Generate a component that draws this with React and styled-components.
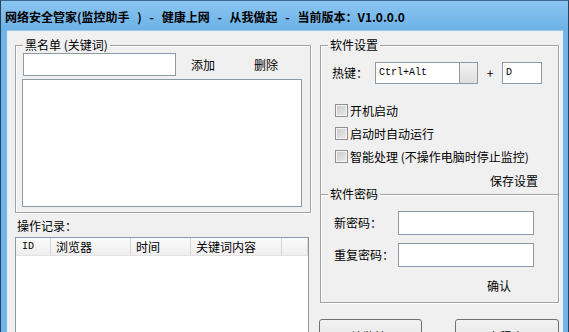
import React from 'react';
import styled, { createGlobalStyle } from 'styled-components';

const GlobalStyle = createGlobalStyle`
  html, body { margin: 0; padding: 0; background: #f0f0f0; }
  body {
    font-family: "Noto Sans CJK SC", "DejaVu Sans", sans-serif;
    font-size: 12px;
    color: #000;
  }
`;

const Window = styled.div`
  width: 569px;
  height: 332px;
  box-sizing: border-box;
  overflow: hidden;
  background: #70b4e9;
  border-left: 1px solid #27435e;
  border-right: 1px solid #27435e;
  border-top: 1px solid #3a6a90;
  display: flex;
  flex-direction: column;
`;

const TitleBar = styled.div`
  height: 29px;
  flex: none;
  display: flex;
  align-items: center;
  padding-left: 4px;
  padding-top: 1px;
  box-sizing: border-box;
  font-size: 12px;
  font-weight: bold;
  word-spacing: 5px;
  white-space: pre;
  background: linear-gradient(#8ac6f1, #6cb1e7);
`;

const Client = styled.div`
  flex: 1;
  margin: 0 5px 0 6px;
  background: #f0f0f0;
  border-top: 1px solid #9fc7e6;
  display: grid;
  grid-template-columns: 296px 239px;
  column-gap: 9px;
  padding: 14px 0 0 8px;
  align-items: start;
`;

const Column = styled.div`
  display: flex;
  flex-direction: column;
`;

const Group = styled.div`
  position: relative;
  box-sizing: border-box;
  height: ${p => p.$h}px;
  border: 1px solid #a2a2a2;
  box-shadow: inset 1px 1px 0 #fff, 1px 1px 0 #fff;
  padding: ${p => p.$pad || '0'};
  display: flex;
  flex-direction: column;
`;

const Legend = styled.span`
  position: absolute;
  top: -9px;
  left: ${p => p.$left || 7}px;
  padding: 0 2px;
  background: #f0f0f0;
  line-height: 16px;
  white-space: nowrap;
`;

const TextBox = styled.div`
  box-sizing: border-box;
  width: ${p => p.$w}px;
  height: ${p => p.$h || 23}px;
  margin-left: ${p => p.$ml || 0}px;
  background: #fff;
  border: 1px solid #8c9aa8;
  font-family: "Liberation Mono", monospace;
  font-size: 10px;
  line-height: ${p => (p.$h || 23) - 2}px;
  padding-left: 3px;
  flex: none;
`;

const FlatButton = styled.div`
  width: ${p => p.$w || 50}px;
  height: ${p => p.$h || 23}px;
  margin-left: ${p => p.$ml || 0}px;
  display: flex;
  align-items: center;
  justify-content: center;
  flex: none;
`;

const Row = styled.div`
  display: flex;
  align-items: center;
  margin-top: ${p => p.$mt || 0}px;
  justify-content: ${p => p.$justify || 'flex-start'};
  padding-left: ${p => p.$pl || 0}px;
  padding-right: ${p => p.$pr || 0}px;
`;

const ListBox = styled.div`
  box-sizing: border-box;
  width: 280px;
  height: 128px;
  margin-top: 3px;
  background: #fff;
  border: 1px solid #8c9aa8;
`;

const LogLabel = styled.div`
  margin: 6px 0 0 2px;
  line-height: 14px;
`;

const ListView = styled.div`
  box-sizing: border-box;
  width: 294px;
  height: 120px;
  margin-top: 4px;
  background: #fff;
  border: 1px solid #8c9aa8;
`;

const HeaderRow = styled.div`
  display: flex;
  height: 17px;
  background: linear-gradient(#fbfbfb, #eeeeee);
  border-bottom: 1px solid #e2e2e2;
`;

const HeaderCell = styled.div`
  box-sizing: border-box;
  width: ${p => p.$w}px;
  flex: ${p => (p.$w ? 'none' : '1')};
  border-right: 1px solid #d6d6d6;
  padding-left: ${p => p.$pl || 5}px;
  line-height: 17px;
  font-family: ${p => (p.$mono ? '"Liberation Mono", monospace' : 'inherit')};
  font-size: ${p => (p.$mono ? '10px' : '12px')};
  white-space: nowrap;
`;

const FieldLabel = styled.div`
  width: ${p => p.$w}px;
  flex: none;
  line-height: 14px;
`;

const ComboButton = styled.div`
  box-sizing: border-box;
  width: 19px;
  height: 22px;
  margin-left: -1px;
  border: 1px solid #8c9aa8;
  background: linear-gradient(#f2f2f2, #dedede);
`;

const Plus = styled.div`
  width: 24px;
  text-align: center;
  line-height: 14px;
`;

const CheckList = styled.div`
  margin-top: 15px;
`;

const CheckRow = styled.label`
  display: flex;
  align-items: center;
  height: 23px;
  padding-left: 14px;
  white-space: nowrap;
`;

const CheckBox = styled.span`
  box-sizing: border-box;
  width: 13px;
  height: 13px;
  margin-right: 2px;
  border: 1px solid #8f8f8f;
  background: linear-gradient(135deg, #c9c9c9, #ececec);
  box-shadow: inset 0 0 0 1px #f4f4f4;
  flex: none;
`;

const ButtonRow = styled.div`
  display: flex;
  justify-content: space-between;
  margin: 16px 0 0 -1px;
`;

const PushButton = styled.button`
  box-sizing: border-box;
  width: ${p => p.$w}px;
  height: 30px;
  border: 1px solid #707070;
  border-radius: 3px;
  background: linear-gradient(#f2f2f2 0%, #ebebeb 50%, #dddddd 51%, #cfcfcf 100%);
  font-family: inherit;
  font-size: 12px;
  padding: 0;
  padding-top: 5px;
`;

export default function App() {
  const checks = ['开机启动', '启动时自动运行', '智能处理 (不操作电脑时停止监控)'];

  return (
    <>
      <GlobalStyle />
      <Window>
        <TitleBar>网络安全管家(监控助手 ) - 健康上网 - 从我做起 - 当前版本：V1.0.0.0</TitleBar>
        <Client>
          <Column>
            <Group $h={168} $pad="7px 0 0 6px">
              <Legend>黑名单 (关键词)</Legend>
              <Row>
                <TextBox $w={153} $ml={1} />
                <FlatButton $ml={2}>添加</FlatButton>
                <FlatButton $ml={13}>删除</FlatButton>
              </Row>
              <ListBox />
            </Group>
            <LogLabel>操作记录：</LogLabel>
            <ListView>
              <HeaderRow>
                <HeaderCell $w={35} $mono $pl={6}>ID</HeaderCell>
                <HeaderCell $w={80}>浏览器</HeaderCell>
                <HeaderCell $w={60}>时间</HeaderCell>
                <HeaderCell $w={91}>关键词内容</HeaderCell>
                <HeaderCell />
              </HeaderRow>
            </ListView>
          </Column>

          <Column>
            <Group $h={150} $pad="16px 0 0 0">
              <Legend>软件设置</Legend>
              <Row $pl={11}>
                <FieldLabel $w={43}>热键：</FieldLabel>
                <TextBox $w={85} $h={22}>Ctrl+Alt</TextBox>
                <ComboButton />
                <Plus>+</Plus>
                <TextBox $w={40} $h={22}>D</TextBox>
              </Row>
              <CheckList>
                {checks.map(c => (
                  <CheckRow key={c}>
                    <CheckBox />
                    {c}
                  </CheckRow>
                ))}
              </CheckList>
              <Row $justify="flex-end" $pr={20} $mt={2}>
                <FlatButton $w={48} $h={20}>保存设置</FlatButton>
              </Row>
            </Group>
            <Group $h={109} $pad="16px 0 0 13px" style={{ marginTop: -1 }}>
              <Legend>软件密码</Legend>
              <Row>
                <FieldLabel $w={64}>新密码：</FieldLabel>
                <TextBox $w={136} $h={24} />
              </Row>
              <Row $mt={8}>
                <FieldLabel $w={64}>重复密码：</FieldLabel>
                <TextBox $w={136} $h={24} />
              </Row>
              <Row $mt={8} $pl={140}>
                <FlatButton $w={50} $h={20}>确认</FlatButton>
              </Row>
            </Group>
            <ButtonRow>
              <PushButton $w={103}>开始监控(S)</PushButton>
              <PushButton $w={104}>退出程序(X)</PushButton>
            </ButtonRow>
          </Column>
        </Client>
      </Window>
    </>
  );
}
